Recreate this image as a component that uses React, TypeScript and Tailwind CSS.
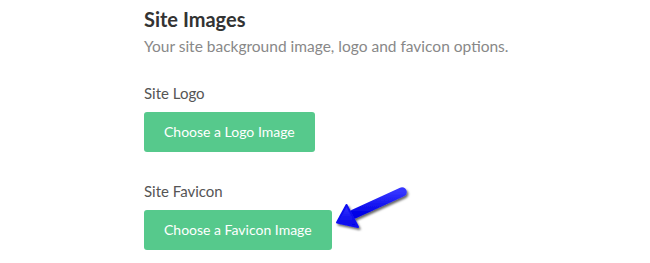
import React from "react";

function Arrow() {
  return (
    <svg
      className="absolute left-[320px] top-[178px]"
      width="100"
      height="62"
      viewBox="320 178 100 62"
      fill="none"
    >
      <defs>
        <filter id="arrow-shadow" x="-20%" y="-20%" width="150%" height="150%">
          <feDropShadow dx="1.5" dy="2" stdDeviation="1.2" floodColor="#000" floodOpacity="0.6" />
        </filter>
        <linearGradient id="arrow-fill" x1="0" y1="0" x2="0" y2="1">
          <stop offset="0" stopColor="#3434ff" />
          <stop offset="1" stopColor="#0000e6" />
        </linearGradient>
      </defs>
      <g filter="url(#arrow-shadow)">
        <path d="M402 192 L354 214" stroke="url(#arrow-fill)" strokeWidth="9.5" strokeLinecap="round" />
        <path d="M337 222.5 L346.5 205 L358 227 Z" fill="url(#arrow-fill)" stroke="#1010f0" strokeWidth="2" strokeLinejoin="round" />
      </g>
    </svg>
  );
}

export default function App() {
  return (
    <div
      className="relative w-[650px] h-[263px] bg-white overflow-hidden pl-[144px] pt-[7px]"
      style={{ fontFamily: "Lato, 'Open Sans', sans-serif" }}
    >
      <h2 className="text-[20px] leading-[25px] font-bold text-[#333]">Site Images</h2>
      <p className="mt-[5px] text-[15.5px] leading-[19px] text-[#888]">
        Your site background image, logo and favicon options.
      </p>

      <div className="mt-[28px] text-[15px] leading-[18px] text-[#555]">Site Logo</div>
      <button className="mt-[10px] h-[40px] px-5 rounded-[3px] bg-[#56c98c] text-[14px] leading-[18px] text-white flex items-center">
        Choose a Logo Image
      </button>

      <div className="mt-[30px] text-[15px] leading-[18px] text-[#555]">Site Favicon</div>
      <button className="mt-[10px] h-[40px] px-5 rounded-[3px] bg-[#56c98c] text-[14px] leading-[18px] text-white flex items-center">
        Choose a Favicon Image
      </button>

      <Arrow />
    </div>
  );
}
